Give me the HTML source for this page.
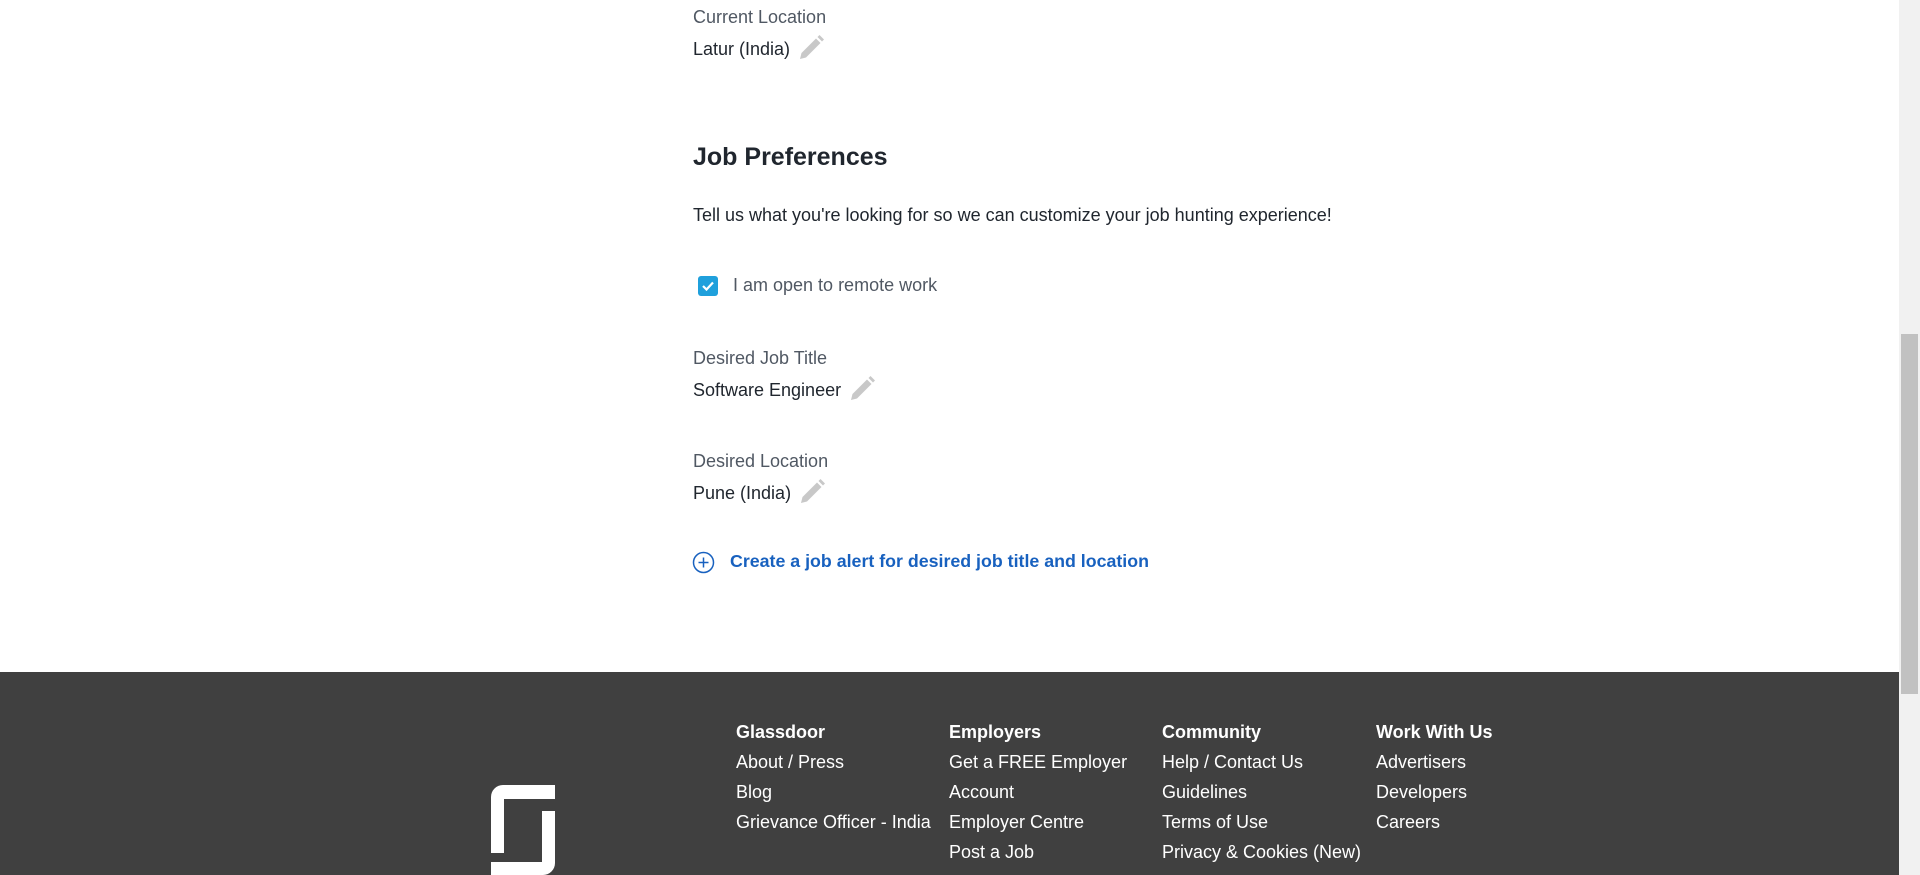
<!DOCTYPE html>
<html><head><style>
body{margin:0;width:1920px;height:875px;overflow:hidden;background:#fff;font-family:"Liberation Sans",sans-serif;position:relative}
.a{position:absolute;white-space:nowrap}
.lbl{color:#505863;font-size:18px}
.val{color:#20262e;font-size:18px}
.pen{position:absolute;margin-left:7px;margin-top:-5px}
.f{color:#fff;font-size:18px;line-height:30px}
.f b{display:block}
</style></head><body>
<div class="a lbl" style="left:693px;top:7px">Current Location</div>
<div class="a val" style="left:693px;top:39px">Latur (India)<svg class="pen" width="28" height="28" viewBox="0 0 28 28"><path d="M3 25l1.5-6L19 4.5l4.5 4.5L9 23.5z" fill="#c8c8c8"/><path d="M20.5 3l2-2 4.5 4.5-2 2z" fill="#c8c8c8"/></svg></div>
<div class="a" style="left:693px;top:143px;font-size:25px;font-weight:bold;color:#20262e">Job Preferences</div>
<div class="a val" style="left:693px;top:205px;font-size:18px">Tell us what you're looking for so we can customize your job hunting experience!</div>
<div class="a" style="left:698px;top:276px;width:20px;height:20px;background:#1fa0dc;border-radius:3px"><svg width="20" height="20"><path d="M5 10l3.5 3.5L15 6.5" stroke="#fff" stroke-width="2.2" fill="none"/></svg></div>
<div class="a lbl" style="left:733px;top:275px">I am open to remote work</div>
<div class="a lbl" style="left:693px;top:348px">Desired Job Title</div>
<div class="a val" style="left:693px;top:380px">Software Engineer<svg class="pen" width="28" height="28" viewBox="0 0 28 28"><path d="M3 25l1.5-6L19 4.5l4.5 4.5L9 23.5z" fill="#c8c8c8"/><path d="M20.5 3l2-2 4.5 4.5-2 2z" fill="#c8c8c8"/></svg></div>
<div class="a lbl" style="left:693px;top:451px">Desired Location</div>
<div class="a val" style="left:693px;top:483px">Pune (India)<svg class="pen" width="28" height="28" viewBox="0 0 28 28"><path d="M3 25l1.5-6L19 4.5l4.5 4.5L9 23.5z" fill="#c8c8c8"/><path d="M20.5 3l2-2 4.5 4.5-2 2z" fill="#c8c8c8"/></svg></div>
<svg class="a" style="left:692px;top:551px" width="23" height="23"><circle cx="11.5" cy="11.5" r="10" fill="none" stroke="#1861bf" stroke-width="1.5"/><path d="M11.5 6.5v10M6.5 11.5h10" stroke="#1861bf" stroke-width="1.5"/></svg>
<div class="a" style="left:730px;top:551px;font-size:17.8px;font-weight:bold;color:#1861bf">Create a job alert for desired job title and location</div>
<div class="a" style="left:0;top:672px;width:1899px;height:203px;background:#404040"></div>
<svg class="a" style="left:491px;top:785px" width="64" height="90"><path d="M0 12a12 12 0 0 1 12-12h52v14H13v54H0z M64 26v52a12 12 0 0 1-12 12H0V77h51V26z" fill="#fff"/></svg>
<div class="a f" style="left:736px;top:717px"><b>Glassdoor</b>About / Press<br>Blog<br>Grievance Officer - India</div>
<div class="a f" style="left:949px;top:717px"><b>Employers</b>Get a FREE Employer<br>Account<br>Employer Centre<br>Post a Job</div>
<div class="a f" style="left:1162px;top:717px"><b>Community</b>Help / Contact Us<br>Guidelines<br>Terms of Use<br>Privacy &amp; Cookies (New)</div>
<div class="a f" style="left:1376px;top:717px"><b>Work With Us</b>Advertisers<br>Developers<br>Careers</div>
<div class="a" style="left:1899px;top:0;width:21px;height:875px;background:#f1f1f1"></div>
<div class="a" style="left:1901px;top:334px;width:17px;height:360px;background:#c1c1c1"></div>
</body></html>
